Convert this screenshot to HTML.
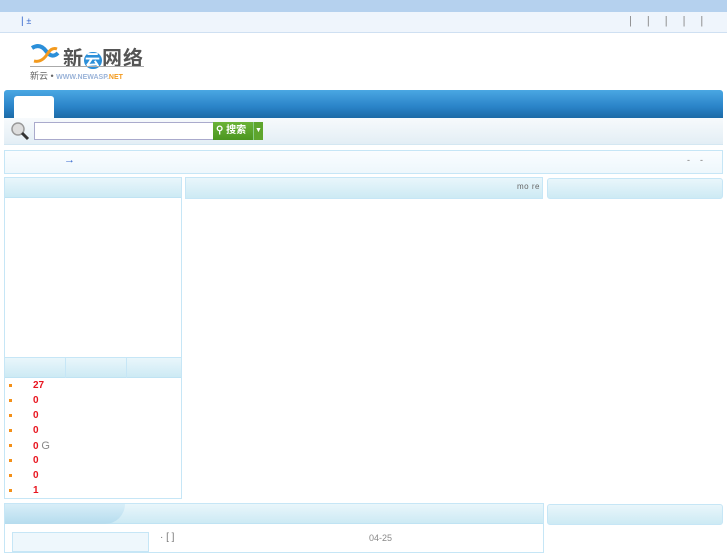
<!DOCTYPE html>
<html><head><meta charset="utf-8"><style>
*{margin:0;padding:0;box-sizing:border-box}
body{width:727px;height:545px;overflow:hidden;background:#fff;font-family:"Liberation Sans","Noto Sans CJK SC",sans-serif;font-size:11px;color:#555;position:relative}
.a{position:absolute}
.hd{background:linear-gradient(#e9f6fb,#cdeaf4);border-bottom:1px solid #bfe3f3}
.bx{border:1px solid #c6e6f6}
.num{color:#e8141e;font-weight:bold;font-size:10px}
.dot{width:3px;height:3px;background:#f39019}
</style></head><body>
<div class="a" style="left:0;top:0;width:727px;height:12px;background:#b5d1ee"></div>
<div class="a" style="left:0;top:12px;width:727px;height:21px;background:#eff5fc;border-bottom:1px solid #cfe0f2"></div>
<div class="a" style="left:21px;top:16px;font-size:10px;color:#36c">| <span style="font-size:9px">±</span></div>
<div class="a" style="left:629px;top:15px;font-size:11px;color:#888;letter-spacing:15px">|||||</div>
<svg class="a" style="left:30px;top:43px" width="30" height="22" viewBox="0 0 30 22"><path d="M2 5 Q10 0 16 8 Q22 16 28 10" stroke="#2b8fd9" stroke-width="4" fill="none"/><path d="M4 18 Q12 20 18 10 Q22 4 27 6" stroke="#f39a1e" stroke-width="3" fill="none"/></svg>
<div class="a" style="left:63px;top:42px;font-size:20px;font-weight:bold;color:#555;letter-spacing:1px">新<span style="color:#fff;background:#2b8fd9;border-radius:10px;font-size:15px;padding:0 1px">云</span>网络</div>
<div class="a" style="left:30px;top:66px;width:114px;height:1px;background:#aaa"></div>
<div class="a" style="left:30px;top:69px;font-size:9px;color:#666">新云 • <span style="color:#9ab3d8;font-weight:bold;font-size:7px">WWW.NEWASP.<span style="color:#f39a1e">NET</span></span></div>
<div class="a" style="left:4px;top:90px;width:719px;height:28px;background:linear-gradient(#4aa7e3,#2a83c8 60%,#1c6aa6);border-radius:3px 3px 0 0"></div>
<div class="a" style="left:14px;top:96px;width:40px;height:22px;background:#fff;border-radius:3px 3px 0 0"></div>
<div class="a" style="left:4px;top:118px;width:719px;height:27px;background:linear-gradient(#f7fafc,#e3eef5);border-bottom:1px solid #d4e7f2"></div>
<svg class="a" style="left:10px;top:121px" width="20" height="20"><circle cx="8" cy="8" r="6" fill="#ddd" stroke="#999" stroke-width="1.5"/><line x1="12" y1="12" x2="18" y2="18" stroke="#333" stroke-width="3"/></svg>
<div class="a" style="left:34px;top:122px;width:180px;height:18px;background:#fff;border:1px solid #aac"></div>
<div class="a" style="left:213px;top:122px;width:40px;height:18px;background:linear-gradient(#6bb338,#4b9620);color:#fff;font-weight:bold;font-size:10px;line-height:18px;padding-left:3px">⚲ 搜索</div>
<div class="a" style="left:253px;top:122px;width:10px;height:18px;background:#5ea52d;border-left:1px solid #8c8;color:#fff;font-size:7px;line-height:18px;text-align:center">▼</div>
<div class="a bx" style="left:4px;top:150px;width:719px;height:24px;background:linear-gradient(#fafdff,#eef7fc)"></div>
<div class="a" style="left:64px;top:154px;color:#36c;font-size:11px">→</div>
<div class="a" style="left:687px;top:155px;color:#777;font-size:9px">-&nbsp;&nbsp;&nbsp;&nbsp;-</div>
<div class="a bx" style="left:4px;top:177px;width:178px;height:322px"></div>
<div class="a hd" style="left:5px;top:178px;width:176px;height:20px"></div>
<div class="a hd" style="left:5px;top:357px;width:176px;height:21px;border-top:1px solid #c6e6f6"></div>
<div class="a" style="left:65px;top:357px;width:1px;height:21px;background:#c6e6f6"></div>
<div class="a" style="left:126px;top:357px;width:1px;height:21px;background:#c6e6f6"></div>
<div class="a dot" style="left:9px;top:384px"></div><div class="a num" style="left:33px;top:380px">27</div>
<div class="a dot" style="left:9px;top:399px"></div><div class="a num" style="left:33px;top:395px">0</div>
<div class="a dot" style="left:9px;top:414px"></div><div class="a num" style="left:33px;top:410px">0</div>
<div class="a dot" style="left:9px;top:429px"></div><div class="a num" style="left:33px;top:425px">0</div>
<div class="a dot" style="left:9px;top:444px"></div><div class="a num" style="left:33px;top:440px">0 <span style="color:#888;font-weight:normal;font-size:11px">G</span></div>
<div class="a dot" style="left:9px;top:459px"></div><div class="a num" style="left:33px;top:455px">0</div>
<div class="a dot" style="left:9px;top:474px"></div><div class="a num" style="left:33px;top:470px">0</div>
<div class="a dot" style="left:9px;top:489px"></div><div class="a num" style="left:33px;top:485px">1</div>
<div class="a bx hd" style="left:185px;top:177px;width:358px;height:22px"></div>
<div class="a" style="left:517px;top:182px;font-size:8px;color:#666;letter-spacing:0.5px">mo re</div>
<div class="a bx hd" style="left:547px;top:178px;width:176px;height:21px;border-radius:3px"></div>
<div class="a bx" style="left:4px;top:503px;width:540px;height:50px"></div>
<div class="a hd" style="left:5px;top:504px;width:538px;height:20px"></div>
<div class="a" style="left:5px;top:504px;width:120px;height:20px;background:linear-gradient(#d8eef8,#b5dcee);border-radius:0 0 40px 0"></div>
<div class="a bx hd" style="left:547px;top:504px;width:176px;height:21px;border-radius:3px"></div>
<div class="a bx" style="left:12px;top:532px;width:137px;height:20px;background:#eef7fc"></div>
<div class="a" style="left:160px;top:532px;color:#777;font-size:10px">· [ ]</div>
<div class="a" style="left:369px;top:533px;color:#888;font-size:9px">04-25</div>
</body></html>
